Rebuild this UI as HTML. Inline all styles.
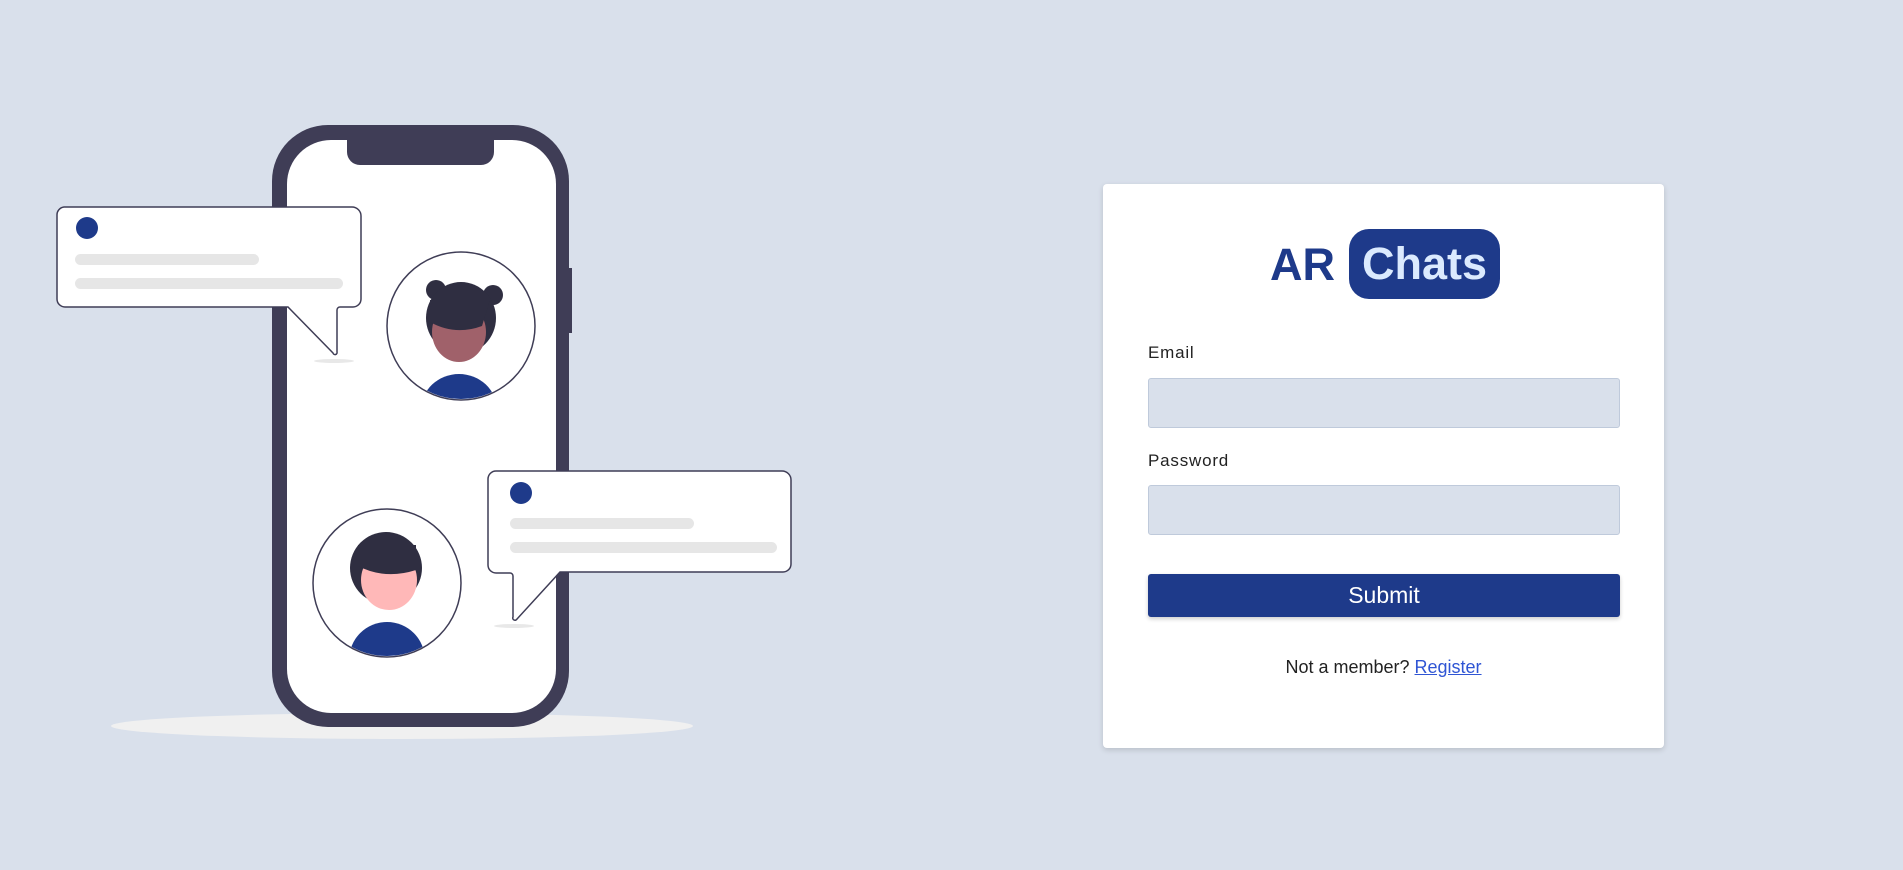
<!DOCTYPE html>
<html><head><style>
*{margin:0;padding:0;box-sizing:border-box}
body{width:1903px;height:870px;background:#d9e0eb;font-family:"Liberation Sans",sans-serif;position:relative;overflow:hidden}
svg.ill{position:absolute;left:0;top:0}
.card{position:absolute;left:1103px;top:184px;width:561px;height:564px;background:#fff;border-radius:4px;box-shadow:0 2px 6px rgba(0,0,0,.15)}
.logo{position:absolute;left:167px;top:45px;height:70px;display:flex;align-items:center}
.ar{font-weight:bold;font-size:45px;color:#1e3a8a;margin-right:14px;margin-top:2px}
.pill{background:#1e3a8a;color:#dbeafe;font-weight:bold;font-size:45px;height:70px;width:151px;border-radius:20px;display:flex;align-items:center;justify-content:center}
.lbl{position:absolute;left:45px;font-size:17px;color:#222;letter-spacing:.8px}
.inp{position:absolute;left:45px;width:472px;height:50px;background:#d9e0eb;border:1px solid #bfcadb;border-radius:3px}
.btn{position:absolute;left:45px;top:390px;width:472px;height:43px;background:#1e3a8a;border-radius:3px;color:#fff;font-size:23px;display:flex;align-items:center;justify-content:center;box-shadow:0 2px 4px rgba(0,0,0,.2)}
.nm{position:absolute;left:0;width:561px;top:473px;text-align:center;font-size:18px;color:#222}
.nm a{color:#2f55d4;text-decoration:underline}
</style></head><body>
<svg class="ill" width="1903" height="870" viewBox="0 0 1903 870">
<ellipse cx="402" cy="726" rx="291" ry="13" fill="#f0f0f0"/>
<rect x="565" y="268" width="7" height="65" fill="#3f3d56"/>
<rect x="272" y="125" width="297" height="602" rx="56" fill="#3f3d56"/>
<rect x="287" y="140" width="269" height="573" rx="44" fill="#fff"/>
<path d="M347 138 H494 V152 A13 13 0 0 1 481 165 H360 A13 13 0 0 1 347 152 Z" fill="#3f3d56"/>
<!-- avatar1 -->
<circle cx="461" cy="326" r="74" fill="#fff" stroke="#3f3d56" stroke-width="1.5"/>
<clipPath id="c1"><circle cx="461" cy="326" r="73"/></clipPath>
<g clip-path="url(#c1)">
<ellipse cx="459" cy="410" rx="38" ry="36" fill="#1e3a8a"/>
<circle cx="436" cy="290" r="10" fill="#2f2e41"/><circle cx="493" cy="295" r="10" fill="#2f2e41"/>
<ellipse cx="461" cy="318" rx="35" ry="36" fill="#2f2e41"/>
<ellipse cx="459" cy="332" rx="27" ry="30" fill="#a0616a"/>
<path d="M430 322 Q455 336 482 326 L490 300 L430 300 Z" fill="#2f2e41"/>
</g>
<!-- avatar2 -->
<circle cx="387" cy="583" r="74" fill="#fff" stroke="#3f3d56" stroke-width="1.5"/>
<clipPath id="c2"><circle cx="387" cy="583" r="73"/></clipPath>
<g clip-path="url(#c2)">
<ellipse cx="387" cy="660" rx="38" ry="38" fill="#1e3a8a"/>
<ellipse cx="386" cy="568" rx="36" ry="36" fill="#2f2e41"/>
<ellipse cx="389" cy="580" rx="28" ry="30" fill="#ffb8b8"/>
<path d="M358 566 Q385 580 416 570 L416 545 L358 545 Z" fill="#2f2e41"/>
</g>
<!-- bubble1 -->
<path d="M64 207 H352 A9 9 0 0 1 361 216 V299 A8 8 0 0 1 353 307 H340 A3 3 0 0 0 337 310 V352 A2 2 0 0 1 333 353 L288 307 H65 A8 8 0 0 1 57 299 V215 A8 8 0 0 1 64 207 Z" fill="#fff" stroke="#3f3d56" stroke-width="1.5"/>
<ellipse cx="334" cy="361" rx="20" ry="2" fill="#e8e8e8"/>
<circle cx="87" cy="228" r="11" fill="#1e3a8a"/>
<rect x="75" y="254" width="184" height="11" rx="5.5" fill="#e6e6e6"/>
<rect x="75" y="278" width="268" height="11" rx="5.5" fill="#e6e6e6"/>
<!-- bubble2 -->
<path d="M496 471 H782 A9 9 0 0 1 791 480 V564 A8 8 0 0 1 783 572 H560 L517 619 A2 2 0 0 1 513 617 V576 A3 3 0 0 0 510 573 H496 A8 8 0 0 1 488 565 V479 A8 8 0 0 1 496 471 Z" fill="#fff" stroke="#3f3d56" stroke-width="1.5"/>
<ellipse cx="514" cy="626" rx="20" ry="2" fill="#e8e8e8"/>
<circle cx="521" cy="493" r="11" fill="#1e3a8a"/>
<rect x="510" y="518" width="184" height="11" rx="5.5" fill="#e6e6e6"/>
<rect x="510" y="542" width="267" height="11" rx="5.5" fill="#e6e6e6"/>
</svg>
<div class="card">
<div class="logo"><span class="ar">AR</span><span class="pill">Chats</span></div>
<div class="lbl" style="top:159px">Email</div>
<div class="inp" style="top:194px"></div>
<div class="lbl" style="top:267px">Password</div>
<div class="inp" style="top:301px"></div>
<div class="btn">Submit</div>
<div class="nm">Not a member? <a>Register</a></div>
</div>
</body></html>
